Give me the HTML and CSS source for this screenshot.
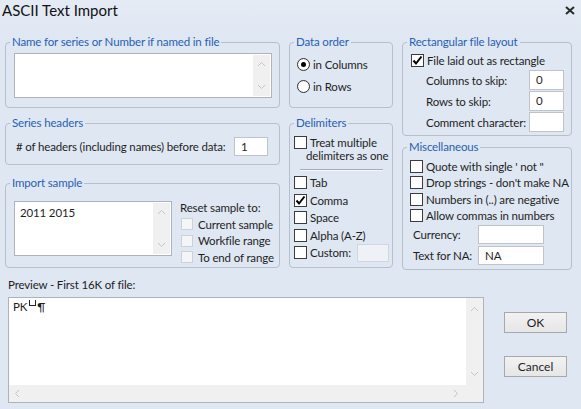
FILE: index.html
```html
<!DOCTYPE html>
<html lang="en">
<head>
    <meta charset="UTF-8">
    <title>ASCII Text Import</title>
    <link rel="stylesheet" href="styles.css">
</head>
<body>
    <div class="titlebar">
        <span class="title">ASCII Text Import</span>
        <svg class="close" width="10" height="9" viewBox="0 0 10 9"><path d="M1 1 L9 8 M9 1 L1 8" stroke="#2b2b2b" stroke-width="2"/></svg>
    </div>

    <div class="top">
        <div class="col col-left">
            <fieldset class="group g-name">
                <legend>Name for series or Number if named in file</legend>
                <div class="textbox tb-name">
                    <div class="tb-text"></div>
                    <div class="vscroll">
                        <svg width="9" height="6" viewBox="0 0 9 6"><path d="M1 5 L4.5 1.5 L8 5" fill="none" stroke="#c4c4c4"/></svg>
                        <svg width="9" height="6" viewBox="0 0 9 6"><path d="M1 1 L4.5 4.5 L8 1" fill="none" stroke="#c4c4c4"/></svg>
                    </div>
                </div>
            </fieldset>

            <fieldset class="group g-series">
                <legend>Series headers</legend>
                <div class="row-field">
                    <span># of headers (including names) before data:</span>
                    <span class="input in-headers">1</span>
                </div>
            </fieldset>

            <fieldset class="group g-import">
                <legend>Import sample</legend>
                <div class="import-body">
                    <div class="textbox tb-sample">
                        <div class="tb-text">2011 2015</div>
                        <div class="vscroll">
                            <svg width="9" height="6" viewBox="0 0 9 6"><path d="M1 5 L4.5 1.5 L8 5" fill="none" stroke="#c4c4c4"/></svg>
                            <svg width="9" height="6" viewBox="0 0 9 6"><path d="M1 1 L4.5 4.5 L8 1" fill="none" stroke="#c4c4c4"/></svg>
                        </div>
                    </div>
                    <div class="reset">
                        <div class="reset-title">Reset sample to:</div>
                        <div class="reset-row"><span class="check small"></span>Current sample</div>
                        <div class="reset-row"><span class="check small"></span>Workfile range</div>
                        <div class="reset-row"><span class="check small"></span>To end of range</div>
                    </div>
                </div>
            </fieldset>
        </div>

        <div class="col col-mid">
            <fieldset class="group g-order">
                <legend>Data order</legend>
                <div class="radio-row"><span class="radio on"></span>in Columns</div>
                <div class="radio-row"><span class="radio"></span>in Rows</div>
            </fieldset>

            <fieldset class="group g-delim">
                <legend>Delimiters</legend>
                <div class="treat">
                    <div class="check-row"><span class="check"></span>Treat multiple</div>
                    <div class="treat-second">delimiters as one</div>
                </div>
                <div class="separator"></div>
                <div class="delim-list">
                    <div class="check-row"><span class="check"></span>Tab</div>
                    <div class="check-row"><span class="check"><svg width="11" height="11" viewBox="0 0 11 11"><path d="M1.5 5.5 L4 8.5 L9.5 1.5" fill="none" stroke="#000" stroke-width="2"/></svg></span>Comma</div>
                    <div class="check-row"><span class="check"></span>Space</div>
                    <div class="check-row"><span class="check"></span>Alpha (A-Z)</div>
                    <div class="check-row"><span class="check"></span>Custom:<span class="input in-custom"></span></div>
                </div>
            </fieldset>
        </div>

        <div class="col col-right">
            <fieldset class="group g-rect">
                <legend>Rectangular file layout</legend>
                <div class="check-row rect-first"><span class="check"><svg width="11" height="11" viewBox="0 0 11 11"><path d="M1.5 5.5 L4 8.5 L9.5 1.5" fill="none" stroke="#000" stroke-width="2"/></svg></span>File laid out as rectangle</div>
                <div class="rect-field"><span>Columns to skip:</span><span class="input in-skip">0</span></div>
                <div class="rect-field"><span>Rows to skip:</span><span class="input in-skip">0</span></div>
                <div class="rect-field"><span>Comment character:</span><span class="input in-skip"></span></div>
            </fieldset>

            <fieldset class="group g-misc">
                <legend>Miscellaneous</legend>
                <div class="misc-list">
                    <div class="check-row"><span class="check"></span>Quote with single ' not "</div>
                    <div class="check-row"><span class="check"></span>Drop strings - don't make NA</div>
                    <div class="check-row"><span class="check"></span>Numbers in (..) are negative</div>
                    <div class="check-row"><span class="check"></span>Allow commas in numbers</div>
                </div>
                <div class="misc-field f-currency"><span>Currency:</span><span class="input in-misc"></span></div>
                <div class="misc-field f-na"><span>Text for NA:</span><span class="input in-misc">NA</span></div>
            </fieldset>
        </div>
    </div>

    <div class="bottom">
        <div class="preview">
            <div class="preview-label">Preview - First 16K of file:</div>
            <div class="preview-box">
                <div class="preview-main">
                    <div class="preview-text">PK<span class="ctrl"></span>¶</div>
                    <div class="vscroll tall">
                        <svg width="9" height="6" viewBox="0 0 9 6"><path d="M1 5 L4.5 1.5 L8 5" fill="none" stroke="#c4c4c4"/></svg>
                        <svg width="9" height="6" viewBox="0 0 9 6"><path d="M1 1 L4.5 4.5 L8 1" fill="none" stroke="#c4c4c4"/></svg>
                    </div>
                </div>
                <div class="hscroll">
                    <svg width="6" height="9" viewBox="0 0 6 9"><path d="M5 1 L1.5 4.5 L5 8" fill="none" stroke="#c4c4c4"/></svg>
                    <svg width="6" height="9" viewBox="0 0 6 9"><path d="M1 1 L4.5 4.5 L1 8" fill="none" stroke="#c4c4c4"/></svg>
                </div>
            </div>
        </div>
        <div class="buttons">
            <button class="btn btn-ok">OK</button>
            <button class="btn btn-cancel">Cancel</button>
        </div>
    </div>
</body>
</html>
```

FILE: styles.css
```css
body {
    margin: 0;
    width: 581px;
    height: 409px;
    overflow: hidden;
    font-family: Lato, "Liberation Sans", sans-serif;
    font-size: 11.5px;
    letter-spacing: -0.15px;
    color: #1e1e1e;
    white-space: nowrap;
    background: linear-gradient(#e4ebf5, #dfe7f2 40px);
}
.titlebar {
    height: 20px;
    display: flex;
    align-items: center;
    justify-content: space-between;
    padding: 0 6px 0 2px;
}
.title {
    font-size: 15px;
    letter-spacing: 0;
    color: #111;
}
.close {
    margin-top: 1px;
}
.top {
    display: flex;
    padding: 15px 0 0 5px;
}
.col {
    display: flex;
    flex-direction: column;
}
.col-left {
    width: 275px;
    margin-right: 9px;
}
.col-mid {
    width: 104px;
    margin-right: 9px;
}
.col-right {
    width: 170px;
}
.group {
    box-sizing: border-box;
    margin: 0;
    padding: 0;
    min-width: 0;
    border: 1px solid #b6bfca;
    border-radius: 4px;
}
.group legend {
    margin-left: 4px;
    padding: 0 2px;
    line-height: 14px;
    color: #2860b4;
}
.g-name { height: 73px; }
.g-series { height: 49px; margin-top: 8px; }
.g-import { height: 92px; margin-top: 11px; }
.g-order { height: 73px; }
.g-delim { height: 152px; margin-top: 8px; }
.g-rect { height: 101px; }
.g-misc { height: 130px; margin-top: 4px; }

.textbox {
    box-sizing: border-box;
    display: flex;
    background: #fff;
    border: 1px solid #aeb3ba;
}
.tb-text {
    flex: 1;
    padding: 3px 5px;
}
.vscroll {
    width: 17px;
    background: #f0f0f0;
    display: flex;
    flex-direction: column;
    justify-content: space-between;
    align-items: center;
    padding: 6px 0 6px;
}
.tb-name {
    height: 45px;
    margin: 4px 7px 0 8px;
}
.tb-name .vscroll {
    margin: 1px 1px 1px 0;
}

.input {
    box-sizing: border-box;
    display: inline-block;
    background: #fff;
    border: 1px solid #bfc4ca;
    padding: 0 6px;
    line-height: 17px;
}
.row-field {
    display: flex;
    align-items: center;
    justify-content: space-between;
    padding: 7px 11px 0 10px;
}
.in-headers {
    width: 34px;
    height: 19px;
}

.import-body {
    display: flex;
    padding: 11px 0 0 8px;
}
.tb-sample {
    width: 158px;
    height: 55px;
}
.tb-sample .tb-text {
    padding: 4px 5px;
}
.tb-sample .vscroll {
    margin: 1px 1px 1px 0;
}
.reset {
    margin-left: 8px;
    margin-top: -1px;
}
.reset-title {
    line-height: 16px;
}
.reset-row {
    display: flex;
    align-items: center;
    height: 16.5px;
    margin-left: 1px;
}

.check {
    box-sizing: border-box;
    width: 13px;
    height: 13px;
    flex: none;
    border: 1px solid #3c3c3c;
    background: #fff;
    margin-right: 3px;
    display: flex;
    align-items: center;
    justify-content: center;
}
.check.small {
    width: 12px;
    height: 12px;
    border-color: #cdd1d6;
    background: #f4f5f7;
    margin-right: 5px;
}
.check-row {
    display: flex;
    align-items: center;
}

.radio-row {
    display: flex;
    align-items: center;
    height: 22px;
    padding-left: 7px;
}
.g-order .radio-row:first-of-type {
    margin-top: 4px;
}
.radio {
    box-sizing: border-box;
    width: 13px;
    height: 13px;
    border-radius: 50%;
    border: 1px solid #2f2f2f;
    background: radial-gradient(circle, #fff 50%, #ececec);
    margin-right: 3px;
    display: flex;
    align-items: center;
    justify-content: center;
}
.radio.on::after {
    content: "";
    width: 5px;
    height: 5px;
    border-radius: 50%;
    background: #000;
}

.treat {
    padding: 5px 0 0 4px;
}
.treat .check-row {
    height: 14px;
}
.treat-second {
    line-height: 14px;
    padding-left: 12px;
}
.separator {
    height: 1px;
    background: #a7adb5;
    margin: 6px 9px 0 10px;
    border-bottom: 1px solid #f4f7fb;
}
.delim-list {
    padding: 3px 0 0 4px;
}
.delim-list .check-row {
    height: 17.5px;
}
.in-custom {
    width: 32px;
    height: 18px;
    margin-left: 6px;
    background: #eef2f7;
    border-color: #d0d7e0;
}

.rect-first {
    height: 20px;
    padding-left: 8px;
    margin-top: 1px;
}
.rect-field {
    display: flex;
    align-items: center;
    justify-content: space-between;
    height: 20px;
    margin-bottom: 1px;
    padding: 0 7px 0 23px;
}
.in-skip {
    width: 35px;
    height: 20px;
}

.misc-list {
    padding: 4px 0 0 7px;
}
.misc-list .check-row {
    height: 16.5px;
}
.misc-field {
    display: flex;
    align-items: center;
    justify-content: space-between;
    padding: 0 27px 0 10px;
}
.f-currency {
    margin-top: 1px;
}
.f-na {
    margin-top: 2px;
}
.in-misc {
    width: 66px;
    height: 19px;
}

.bottom {
    display: flex;
    padding: 8px 0 0 8px;
}
.preview {
    width: 476px;
}
.preview-label {
    line-height: 14px;
}
.preview-box {
    box-sizing: border-box;
    height: 106px;
    margin-top: 5px;
    background: #fff;
    border: 1px solid #aeb3ba;
    display: flex;
    flex-direction: column;
}
.preview-main {
    flex: 1;
    display: flex;
}
.preview-text {
    flex: 1;
    padding: 2px 4px;
}
.ctrl {
    display: inline-block;
    width: 5px;
    height: 5px;
    border: 1px solid #222;
    border-top: none;
    margin: 0 1px 0 2px;
    vertical-align: 5px;
}
.vscroll.tall {
    padding: 8px 0 8px;
}
.hscroll {
    height: 17px;
    background: #f0f0f0;
    display: flex;
    align-items: center;
    justify-content: space-between;
    padding: 0 24px 0 5px;
}
.buttons {
    display: flex;
    flex-direction: column;
    margin-left: 20px;
    padding-top: 34px;
}
.btn {
    box-sizing: border-box;
    width: 63px;
    height: 21px;
    font-family: inherit;
    font-size: 12px;
    color: #1e1e1e;
    border: 1px solid #a8a8a8;
    border-radius: 0;
    background: linear-gradient(#f2f2f2, #e6e6e6);
    padding: 0;
}
.btn-cancel {
    margin-top: 23px;
}
```
